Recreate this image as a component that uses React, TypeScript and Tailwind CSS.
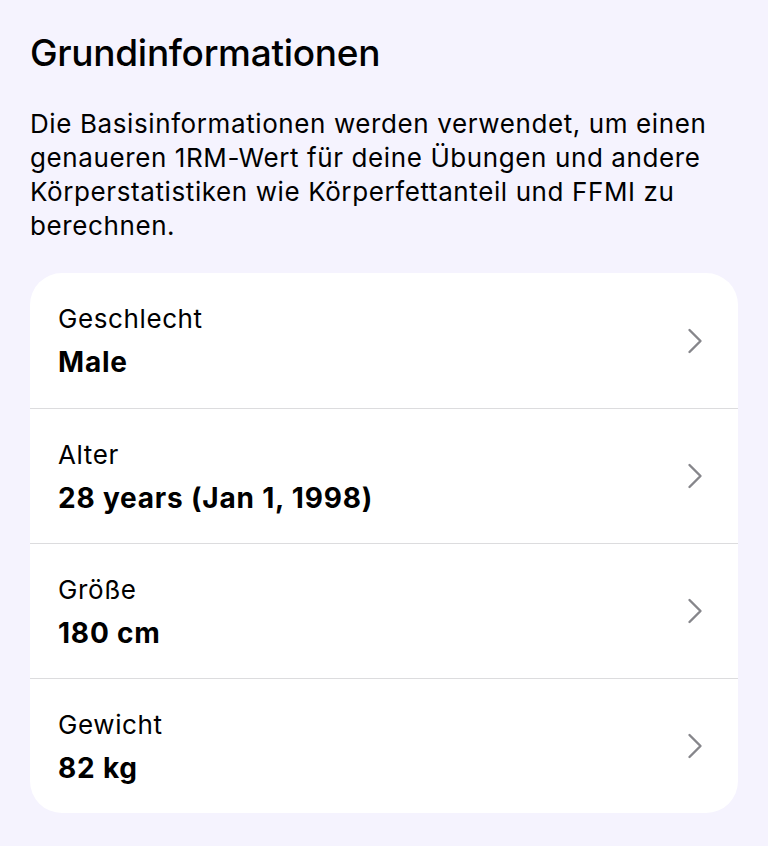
const rows = [
  { label: 'Geschlecht', value: 'Male' },
  { label: 'Alter', value: '28 years (Jan 1, 1998)' },
  { label: 'Größe', value: '180 cm' },
  { label: 'Gewicht', value: '82 kg' },
];

function Chevron() {
  return (
    <svg width="16" height="26" viewBox="0 0 16 26" fill="none" stroke="#86868b" strokeWidth="2.4" strokeLinecap="round" strokeLinejoin="round">
      <path d="M2.5 2 L13.5 13 L2.5 24" />
    </svg>
  );
}

export default function App() {
  return (
    <main
      className="min-h-[846px] bg-[#f5f3fe] px-[30px] pt-[30px] pb-[34px] text-black"
      style={{ fontFamily: 'Inter, "Noto Sans", sans-serif' }}
    >
      <h1 className="text-[37px] font-medium leading-[46px] tracking-[-0.3px]">Grundinformationen</h1>

      <p className="mt-[31px] text-[26px] leading-[34px] tracking-[0.6px]">
        Die Basisinformationen werden verwendet, um einen genaueren 1RM-Wert für deine Übungen und andere
        Körperstatistiken wie Körperfettanteil und FFMI zu berechnen.
      </p>

      {/* Karte mit den Werten */}
      <div className="mt-[30px] bg-white rounded-[32px] overflow-hidden">
        {rows.map((row, i) => (
          <div
            key={row.label}
            className={`flex items-center h-[135px] pl-[28px] pr-[35px] ${i > 0 ? 'border-t border-[#dcdcde]' : ''}`}
          >
            <div className="flex-1">
              <div className="text-[26px] leading-[34px] tracking-[0.6px]">{row.label}</div>
              <div className="mt-[9px] text-[28px] leading-[34px] font-bold tracking-[0.8px]">{row.value}</div>
            </div>
            <Chevron />
          </div>
        ))}
      </div>
    </main>
  );
}
